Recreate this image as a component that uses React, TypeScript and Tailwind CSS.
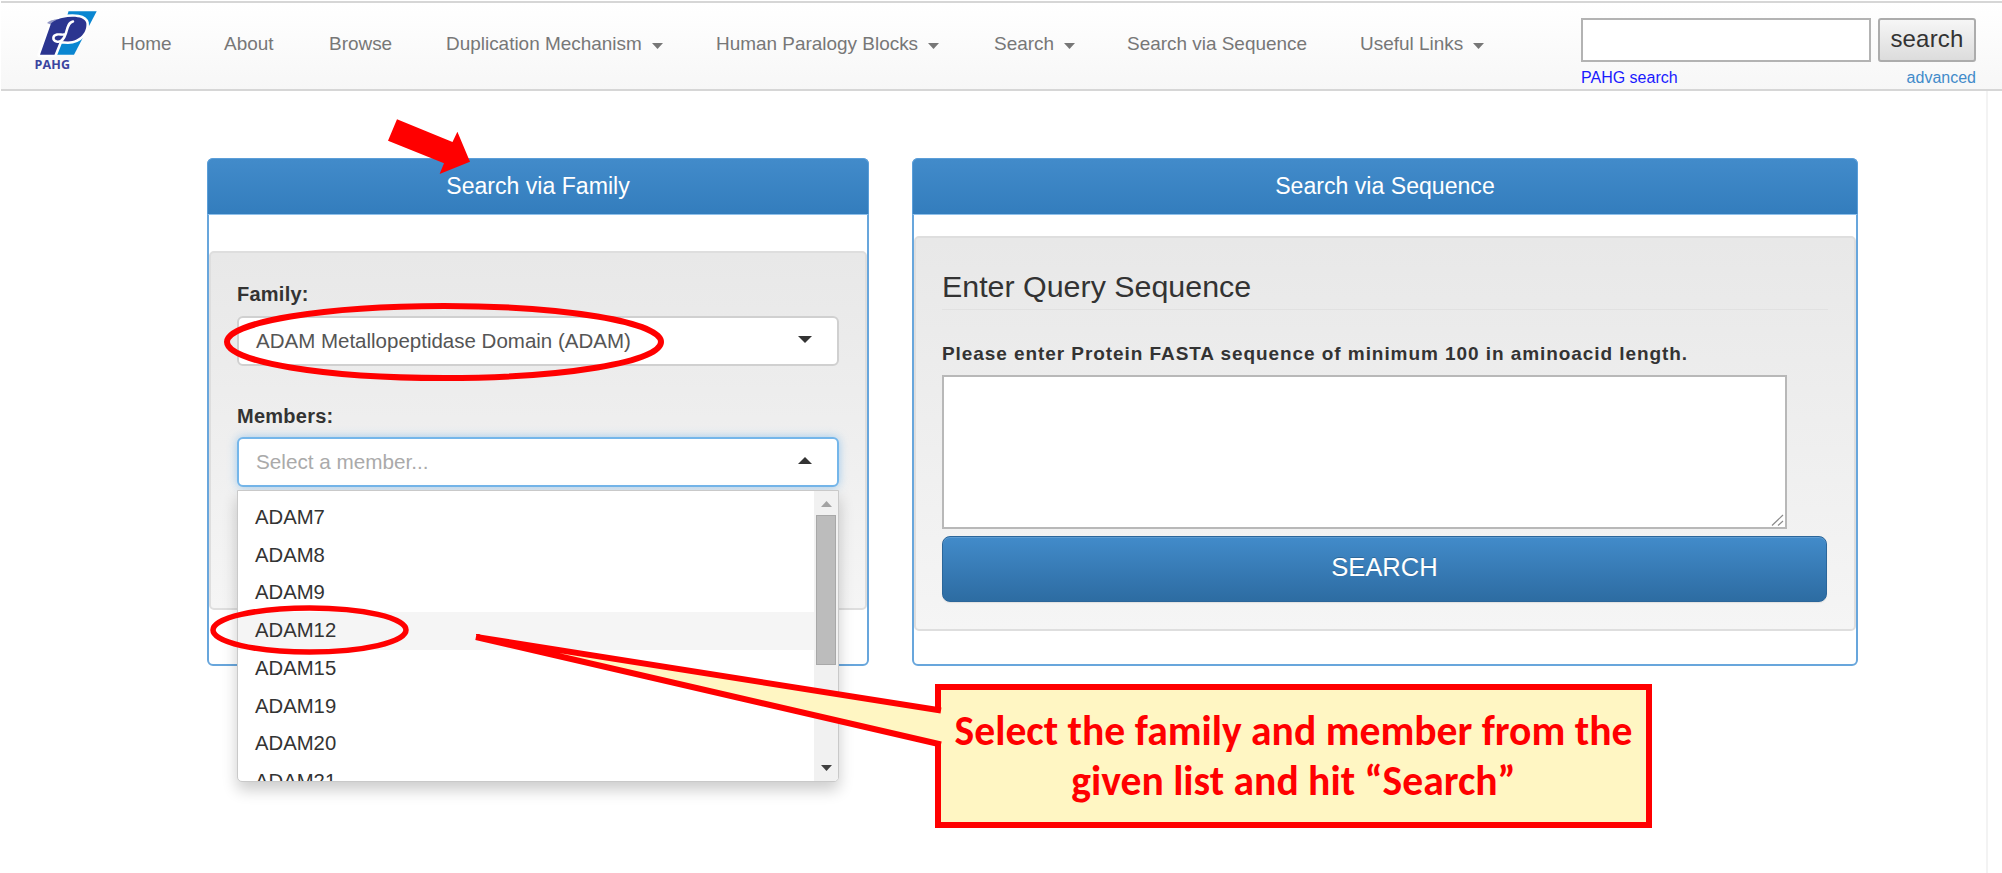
import React from "react";

type NavItem = { label: string; width: string; caret?: boolean };

const NAV: NavItem[] = [
  { label: "Home", width: "w-[103px]" },
  { label: "About", width: "w-[105px]" },
  { label: "Browse", width: "w-[117px]" },
  { label: "Duplication Mechanism", width: "w-[270px]", caret: true },
  { label: "Human Paralogy Blocks", width: "w-[278px]", caret: true },
  { label: "Search", width: "w-[133px]", caret: true },
  { label: "Search via Sequence", width: "w-[233px]" },
  { label: "Useful Links", width: "w-[221px]", caret: true },
];

const MEMBERS = ["ADAM7", "ADAM8", "ADAM9", "ADAM12", "ADAM15", "ADAM19", "ADAM20", "ADAM21"];

function Triangle({ up, className }: { up?: boolean; className: string }) {
  return (
    <svg viewBox="0 0 14 7" preserveAspectRatio="none" className={className} fill="currentColor">
      <path d={up ? "M0 7L7 0L14 7Z" : "M0 0H14L7 7Z"} />
    </svg>
  );
}

function Logo() {
  return (
    <svg width="70" height="68" viewBox="-4 0 70 68" className="mt-[9px] ml-[29px] shrink-0">
      <path d="M34.500 1.300H62.700L40 44.700H22Z" fill="#0a86d1" />
      <path
        d="M6 44.700L17 13.500C20 11 22 9.500 28 8C40 5.500 51 7 52.300 13C53.500 22 46 31 34 31.500L26 31L20.500 44.700Z"
        fill="#2b3590"
        stroke="#fff"
        strokeWidth="5.200"
        strokeLinejoin="round"
        paintOrder="stroke"
      />
      <path
        d="M39 11.500C34.500 12 33.500 18 32 23C30 29 27.500 33 22.500 31.500C18 30 18.500 25.500 23 24.500C25.500 24 28 25 30 24.500"
        fill="none"
        stroke="#fff"
        strokeWidth="2.500"
        strokeLinecap="round"
      />
      <path d="M13 13C17 9.500 21 9.500 26 9L19 15.500Z" fill="#2b3590" opacity=".5" />
      <text x="0.500" y="59.300" fontFamily="Open Sans, sans-serif" fontWeight="700" fontSize="12.500" textLength="35.500" fill="#3b45a0">
        PAHG
      </text>
    </svg>
  );
}

function Header() {
  return (
    <header className="mt-px ml-px flex h-[90px] border-y-2 border-[#d6d6d6] bg-linear-to-b from-white to-[#f7f7f7]">
      <div className="-mt-0.5 w-[120px] shrink-0">
        <Logo />
      </div>
      <nav className="flex items-start pt-[28px] text-[18.950px] leading-[26px] text-[#777]">
        {NAV.map((item) => (
          <a key={item.label} className={`${item.width} flex shrink-0 items-center whitespace-nowrap`}>
            {item.label}
            {item.caret && <Triangle className="mt-[4px] ml-[10px] h-[6px] w-[11px]" />}
          </a>
        ))}
      </nav>
      <div className="w-[395px] shrink-0 pt-[15px]">
        <div className="flex gap-[7px]">
          <input className="h-[44px] w-[290px] border-2 border-[#b3b3b3] bg-white" />
          <button className="h-[44px] w-[98px] rounded-[3px] border-2 border-[#acacac] bg-linear-to-b from-[#f6f6f6] to-[#dcdcdc] pb-[3px] text-[24px] leading-[36px] tracking-[0.2px] text-[#333]">
            search
          </button>
        </div>
        <div className="mt-[6px] flex justify-between text-[16px] leading-[20px]">
          <a className="text-[#1a1aff]">PAHG search</a>
          <a className="text-[#428bca]">advanced</a>
        </div>
      </div>
    </header>
  );
}

function PanelHeading({ children }: { children: React.ReactNode }) {
  return (
    <h2 className="-mx-0.5 -mt-0.5 h-[57px] rounded-t-[6px] border border-[#5b9ed8] border-b-[#8fc0ea] bg-linear-to-b from-[#428bca] to-[#337dbd] text-center text-[23.100px] leading-[54px] text-white">
      {children}
    </h2>
  );
}

function MemberList() {
  return (
    <div className="absolute top-[53px] left-0 z-10 flex h-[292px] w-[602px] overflow-hidden rounded-b-[5px] border border-[#c9c9c9] bg-white shadow-[0_8px_15px_rgba(0,0,0,0.2)]">
      <ul className="h-full flex-1 overflow-hidden pt-[8px] text-[20.300px] leading-[37.700px] text-[#333]">
        {MEMBERS.map((m) => (
          <li key={m} className={m === "ADAM12" ? "bg-[#f5f5f5] pl-[17px]" : "pl-[17px]"}>
            {m}
          </li>
        ))}
      </ul>
      <div className="flex w-[24px] flex-col items-center bg-[#f1f1f1]">
        <Triangle up className="mt-[10px] h-[6px] w-[11px] text-[#a3a3a3]" />
        <div className="mt-[8px] h-[150px] w-[20px] border border-[#a8a8a8] bg-[#bcbcbc]" />
        <Triangle className="mt-auto mb-[10px] h-[6px] w-[11px] text-[#404040]" />
      </div>
    </div>
  );
}

function FamilyPanel() {
  return (
    <section className="h-[508px] w-[662px] rounded-[6px] border-2 border-[#68a6dc] bg-white">
      <PanelHeading>Search via Family</PanelHeading>
      <div className="mt-[36px] h-[359px] rounded-[5px] border-2 border-[#dedede] bg-linear-to-b from-[#e8e8e8] to-[#f5f5f5] px-[26px] pt-[27px]">
        <label className="block text-[20px] leading-[28px] font-bold tracking-[0.250px] text-[#333]">Family:</label>
        <div className="mt-[8px] flex h-[50px] w-[602px] items-center justify-between rounded-[6px] border-2 border-[#d0d0d0] bg-white pr-[25px] pl-[17px] text-[20.500px] text-[#555]">
          <span className="whitespace-nowrap">ADAM Metallopeptidase Domain (ADAM)</span>
          <Triangle className="-mt-1 h-[7px] w-[14px] text-[#333]" />
        </div>
        <label className="mt-[36px] block text-[20px] leading-[28px] font-bold tracking-[0.250px] text-[#333]">Members:</label>
        <div className="relative mt-[7px] w-[602px]">
          <div className="flex h-[50px] items-center justify-between rounded-[6px] border-2 border-[#74b6ea] bg-white pr-[25px] pl-[17px] text-[20.700px] text-[#aaa] shadow-[0_0_10px_rgba(102,175,233,0.6)]">
            <span>Select a member...</span>
            <Triangle up className="-mt-1 h-[7px] w-[14px] text-[#333]" />
          </div>
          <MemberList />
        </div>
      </div>
    </section>
  );
}

function SequencePanel() {
  return (
    <section className="h-[508px] w-[946px] rounded-[6px] border-2 border-[#68a6dc] bg-white">
      <PanelHeading>Search via Sequence</PanelHeading>
      <div className="mt-[21px] h-[395px] rounded-[5px] border-2 border-[#dedede] bg-linear-to-b from-[#e8e8e8] to-[#f5f5f5] px-[26px] pt-[28px]">
        <h3 className="h-[44px] border-b border-[#e1e1e1] text-[30.400px] leading-[41px] text-[#333]">Enter Query Sequence</h3>
        <label className="mt-[30px] block text-[19px] leading-[28px] font-bold tracking-[0.930px] whitespace-nowrap text-[#333]">
          Please enter Protein FASTA sequence of minimum 100 in aminoacid length.
        </label>
        <div className="mt-[7px] flex h-[154px] w-[845px] items-end justify-end border-2 border-[#b8b8b8] bg-white">
          <svg width="14" height="14" viewBox="0 0 14 14" stroke="#8a8a8a" strokeWidth="1.200">
            <path d="M1 12.500L12 2M7 12.500L12 8" />
          </svg>
        </div>
        <button className="mt-[7px] block h-[66px] w-[885px] rounded-[8px] border border-[#2b669a] bg-linear-to-b from-[#428bca] to-[#2d6ca2] pb-[4px] text-[25.600px] leading-[60px] text-white [text-shadow:0_-1px_0_rgba(0,0,0,0.2)] shadow-[inset_0_1px_0_rgba(255,255,255,0.15),0_1px_1px_rgba(0,0,0,0.08)]">
          SEARCH
        </button>
      </div>
    </section>
  );
}

function Annotations() {
  return (
    <>
      <div className="absolute top-[684px] left-[935px] z-20 flex h-[144px] w-[717px] flex-col items-center border-[6px] border-[#f00] bg-[#fff6c3] pt-[16px] text-center font-[Carlito,Calibri,Lato,sans-serif] text-[41.600px] leading-[50px] font-bold text-[#f00]">
        <span className="whitespace-nowrap">Select the family and member from the</span>
        <span className="whitespace-nowrap">given list and hit “Search”</span>
      </div>
      <svg width="2002" height="873" viewBox="0 0 2002 873" className="pointer-events-none absolute top-0 left-0 z-30">
        <path d="M397 119.300L452.500 142L457.400 131.700L470 161.700L439.600 174L444 163.300L388 140.700Z" fill="#f00" />
        <ellipse cx="444" cy="342" rx="217" ry="36" fill="none" stroke="#f00" strokeWidth="6" />
        <ellipse cx="309.500" cy="630" rx="96.500" ry="22" fill="none" stroke="#f00" strokeWidth="5.500" />
        <path d="M941 710.500L476 637L941 744.500Z" fill="#fff6c3" />
        <path d="M941 710.500L476 637L941 744.500" fill="none" stroke="#f00" strokeWidth="6" strokeLinejoin="bevel" />
      </svg>
    </>
  );
}

export default function App() {
  return (
    <div className="relative h-[873px] w-[2002px] overflow-hidden bg-white font-['Liberation_Sans',Arial,sans-serif]">
      <Header />
      <main className="flex h-[782px] w-[1988px] gap-[43px] border-r-2 border-[#f3f3f3] pt-[67px] pl-[207px]">
        <FamilyPanel />
        <SequencePanel />
      </main>
      <Annotations />
    </div>
  );
}
